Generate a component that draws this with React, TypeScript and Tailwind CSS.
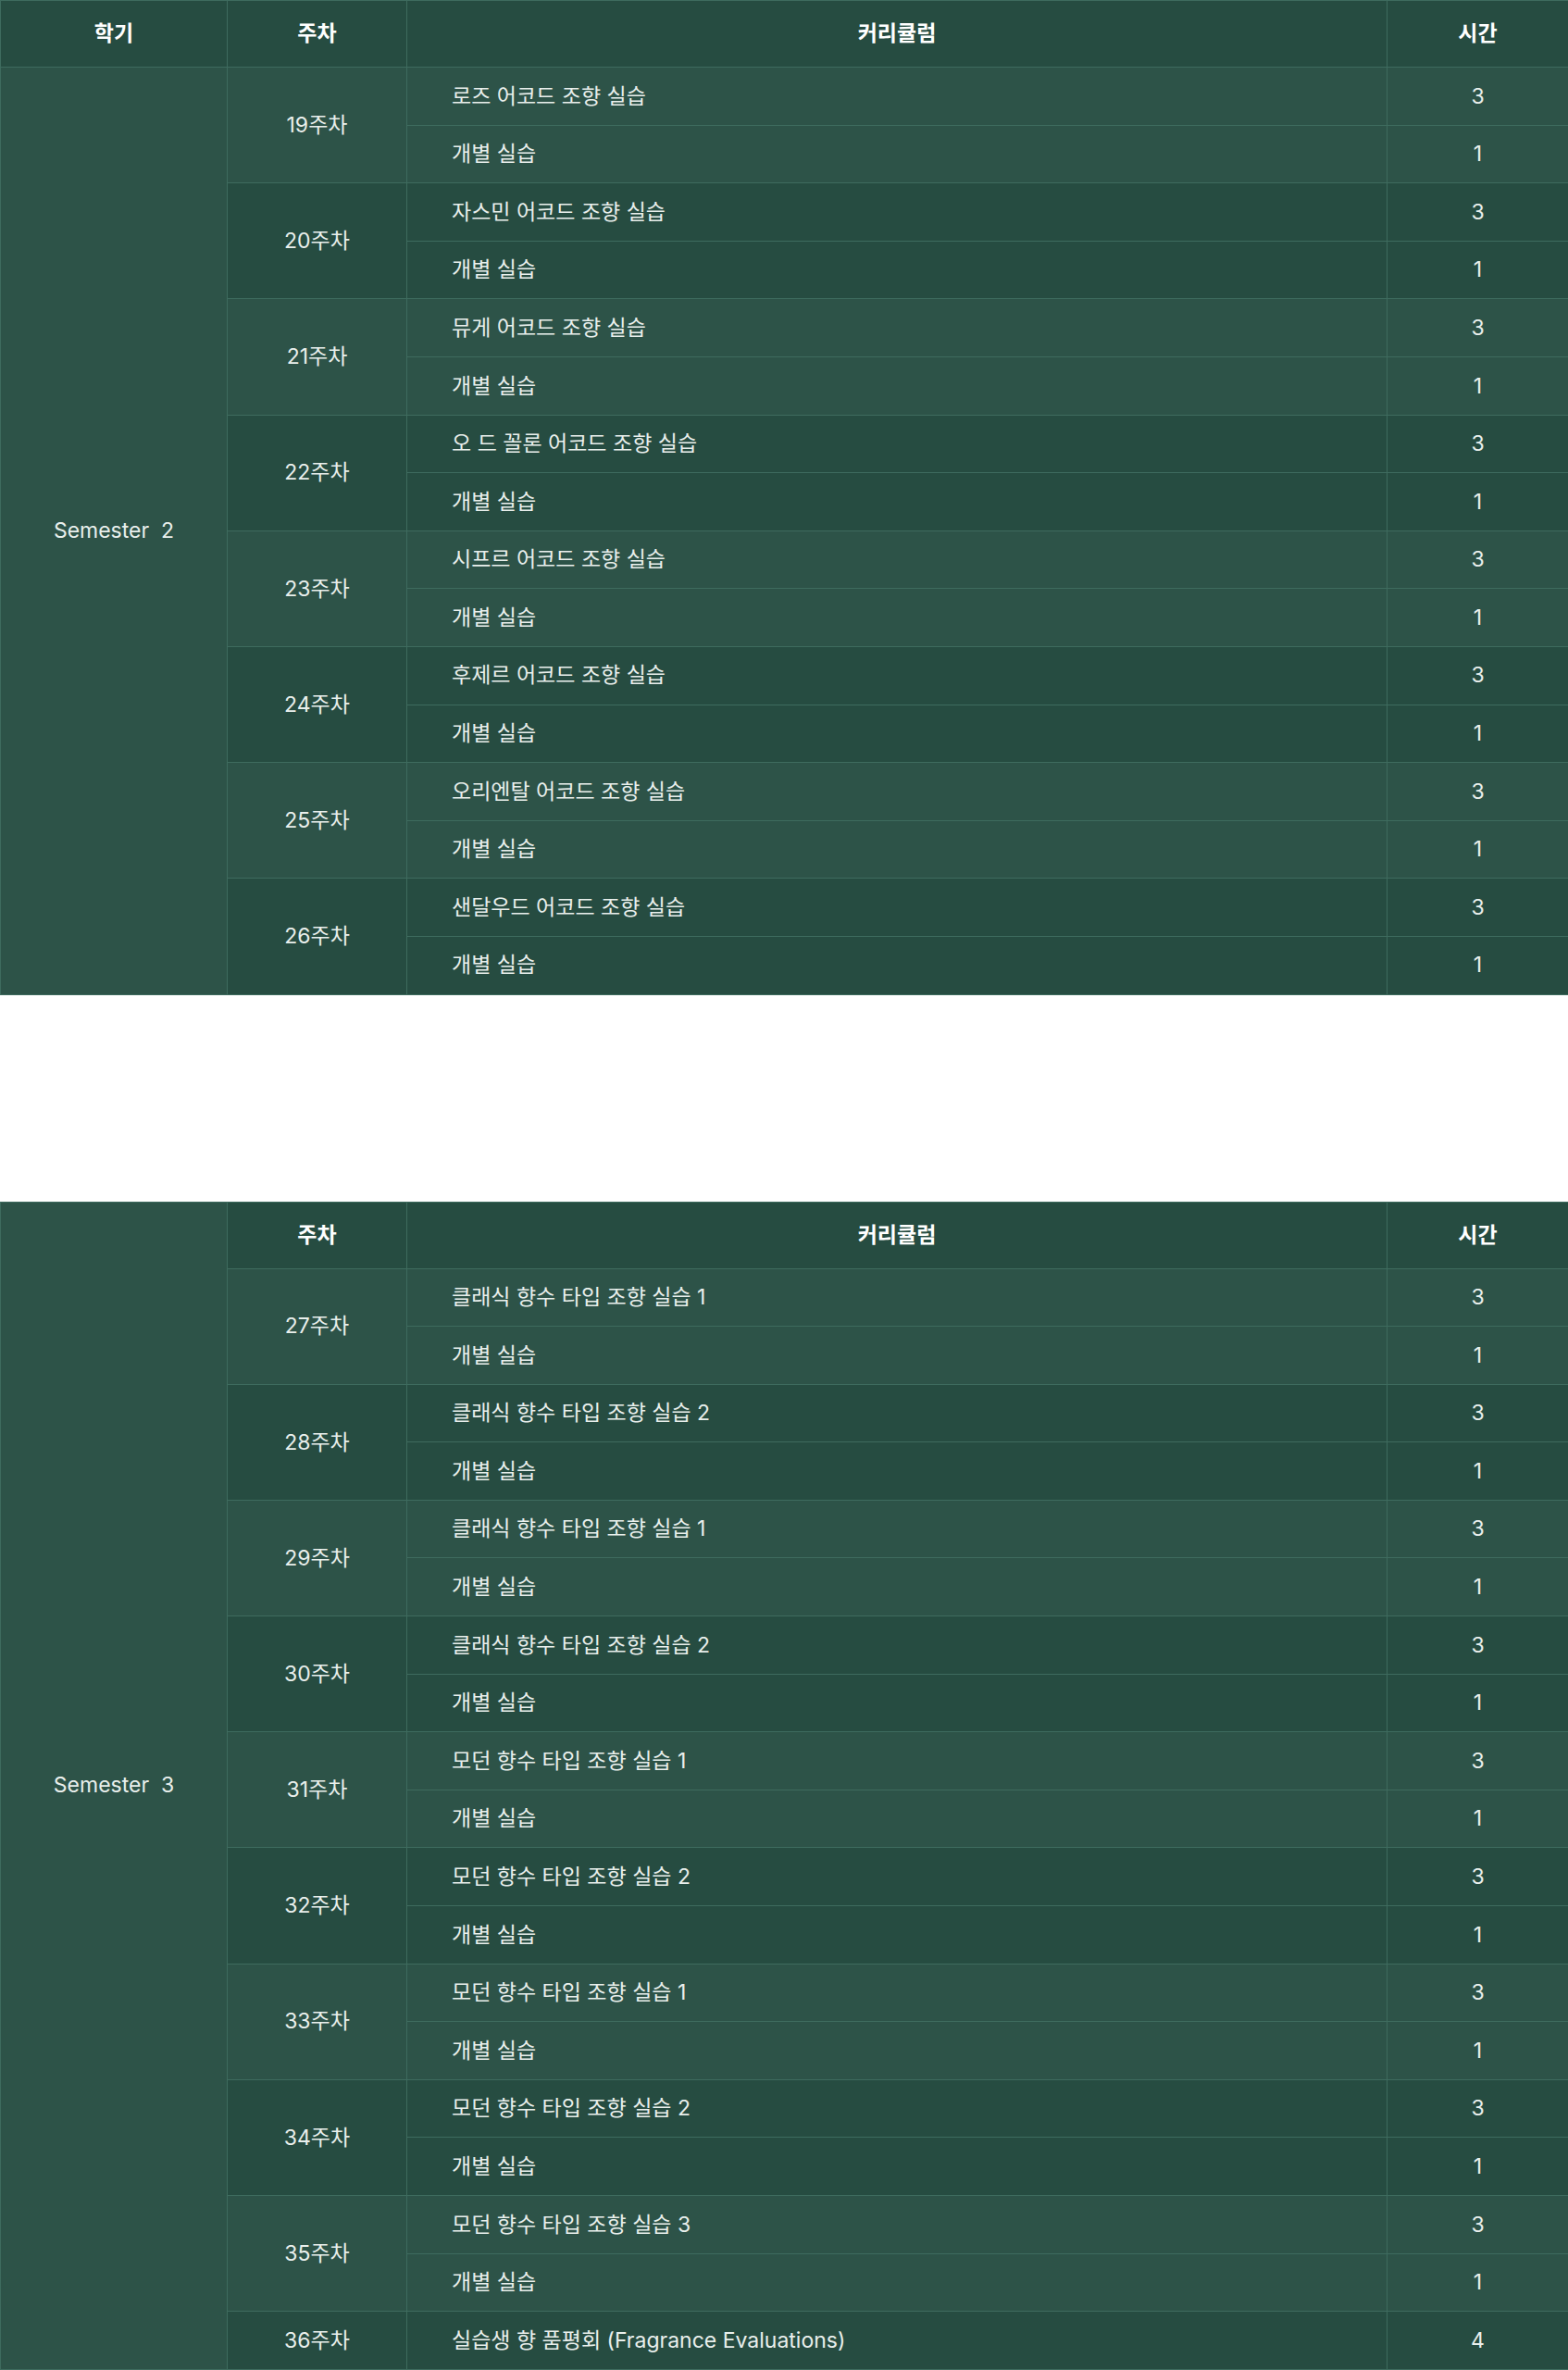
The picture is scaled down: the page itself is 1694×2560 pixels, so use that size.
import React from "react";

type Week = { week: string; items: { title: string; hours: number }[] };

const sem2: Week[] = [
  { week: "19주차", items: [{ title: "로즈 어코드 조향 실습", hours: 3 }, { title: "개별 실습", hours: 1 }] },
  { week: "20주차", items: [{ title: "자스민 어코드 조향 실습", hours: 3 }, { title: "개별 실습", hours: 1 }] },
  { week: "21주차", items: [{ title: "뮤게 어코드 조향 실습", hours: 3 }, { title: "개별 실습", hours: 1 }] },
  { week: "22주차", items: [{ title: "오 드 꼴론 어코드 조향 실습", hours: 3 }, { title: "개별 실습", hours: 1 }] },
  { week: "23주차", items: [{ title: "시프르 어코드 조향 실습", hours: 3 }, { title: "개별 실습", hours: 1 }] },
  { week: "24주차", items: [{ title: "후제르 어코드 조향 실습", hours: 3 }, { title: "개별 실습", hours: 1 }] },
  { week: "25주차", items: [{ title: "오리엔탈 어코드 조향 실습", hours: 3 }, { title: "개별 실습", hours: 1 }] },
  { week: "26주차", items: [{ title: "샌달우드 어코드 조향 실습", hours: 3 }, { title: "개별 실습", hours: 1 }] },
];

const sem3: Week[] = [
  { week: "27주차", items: [{ title: "클래식 향수 타입 조향 실습 1", hours: 3 }, { title: "개별 실습", hours: 1 }] },
  { week: "28주차", items: [{ title: "클래식 향수 타입 조향 실습 2", hours: 3 }, { title: "개별 실습", hours: 1 }] },
  { week: "29주차", items: [{ title: "클래식 향수 타입 조향 실습 1", hours: 3 }, { title: "개별 실습", hours: 1 }] },
  { week: "30주차", items: [{ title: "클래식 향수 타입 조향 실습 2", hours: 3 }, { title: "개별 실습", hours: 1 }] },
  { week: "31주차", items: [{ title: "모던 향수 타입 조향 실습 1", hours: 3 }, { title: "개별 실습", hours: 1 }] },
  { week: "32주차", items: [{ title: "모던 향수 타입 조향 실습 2", hours: 3 }, { title: "개별 실습", hours: 1 }] },
  { week: "33주차", items: [{ title: "모던 향수 타입 조향 실습 1", hours: 3 }, { title: "개별 실습", hours: 1 }] },
  { week: "34주차", items: [{ title: "모던 향수 타입 조향 실습 2", hours: 3 }, { title: "개별 실습", hours: 1 }] },
  { week: "35주차", items: [{ title: "모던 향수 타입 조향 실습 3", hours: 3 }, { title: "개별 실습", hours: 1 }] },
  { week: "36주차", items: [{ title: "실습생 향 품평회 (Fragrance Evaluations)", hours: 4 }] },
];

const cell = "border border-[#3e6b5e]";
const head = `${cell} bg-[#264c41] font-bold text-white`;

function CurriculumTable({
  semester,
  weeks,
  semesterSpansHeader,
}: {
  semester: string;
  weeks: Week[];
  semesterSpansHeader: boolean;
}) {
  const totalRows = weeks.reduce((n, w) => n + w.items.length, 0);
  const semCell = (
    <td
      rowSpan={semesterSpansHeader ? totalRows + 1 : totalRows}
      className={`${cell} bg-[#2d5348] text-center align-middle font-normal text-[#e9efec]`}
    >
      {semester.replace(" ", "\u00a0\u00a0")}
    </td>
  );
  return (
    <table className="w-[1694px] table-fixed border-collapse border border-[#5d8c7e] text-[23px] text-[#e9efec]">
      <colgroup>
        <col className="w-[245px]" />
        <col className="w-[194px]" />
        <col className="w-[1059px]" />
        <col className="w-[196px]" />
      </colgroup>
      <tbody>
        <tr className="h-[72px]">
          {semesterSpansHeader ? semCell : <th className={head}>학기</th>}
          <th className={head}>주차</th>
          <th className={head}>커리큘럼</th>
          <th className={head}>시간</th>
        </tr>
        {weeks.map((w, wi) => {
          const bg = wi % 2 === 0 ? "bg-[#2d5348]" : "bg-[#264c41]";
          return w.items.map((it, ii) => (
            <tr key={`${w.week}-${ii}`} className="h-[62.6px]">
              {!semesterSpansHeader && wi === 0 && ii === 0 ? semCell : null}
              {ii === 0 ? (
                <td rowSpan={w.items.length} className={`${cell} ${bg} text-center align-middle`}>
                  {w.week}
                </td>
              ) : null}
              <td className={`${cell} ${bg} pl-[48px] text-left align-middle whitespace-nowrap`}>{it.title}</td>
              <td className={`${cell} ${bg} text-center align-middle`}>{it.hours}</td>
            </tr>
          ));
        })}
      </tbody>
    </table>
  );
}

export default function App() {
  return (
    <div
      className="w-[1694px] bg-white"
      style={{ fontFamily: 'Inter, "Noto Sans CJK KR", sans-serif' }}
    >
      <CurriculumTable semester="Semester 2" weeks={sem2} semesterSpansHeader={false} />
      <div className="h-[223px]" />
      <CurriculumTable semester="Semester 3" weeks={sem3} semesterSpansHeader={true} />
    </div>
  );
}
